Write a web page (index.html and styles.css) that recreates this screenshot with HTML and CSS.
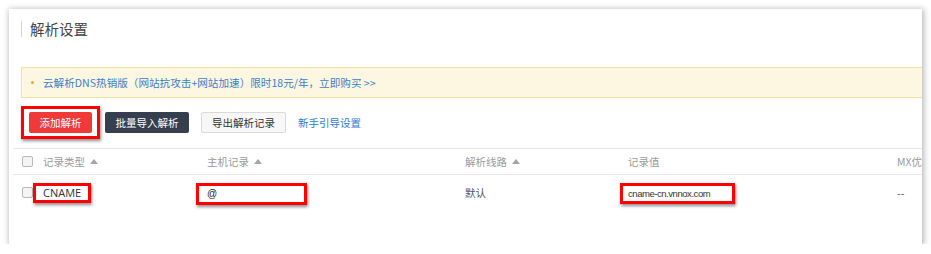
FILE: index.html
```html
<!DOCTYPE html>
<html lang="zh-CN">
<head>
  <meta charset="UTF-8" />
  <meta name="viewport" content="width=device-width, initial-scale=1.0" />
  <title>解析设置</title>
  <link rel="stylesheet" href="styles.css">
</head>
<body>
  <div class="panel">
    <h1 class="title">解析设置</h1>

    <div class="notice">
      <span class="dot"></span>
      <a href="#">云解析DNS热销版（网站抗攻击+网站加速）限时18元/年，立即购买 &gt;&gt;</a>
    </div>

    <div class="toolbar">
      <span class="mark mark-btn"><button class="btn btn-red">添加解析</button></span>
      <button class="btn btn-dark">批量导入解析</button>
      <button class="btn btn-light">导出解析记录</button>
      <a class="guide" href="#">新手引导设置</a>
    </div>

    <div class="table">
      <div class="row head">
        <div><span class="check"></span></div>
        <div>记录类型<i class="sort"></i></div>
        <div>主机记录<i class="sort"></i></div>
        <div>解析线路<i class="sort"></i></div>
        <div>记录值</div>
        <div class="nowrap">MX优先级</div>
      </div>
      <div class="row data">
        <div><span class="check"></span></div>
        <div><span class="mark mark-type">CNAME</span></div>
        <div><span class="mark mark-host">@</span></div>
        <div class="plain">默认</div>
        <div><span class="mark mark-value">cname-cn.vnnox.com</span></div>
        <div class="plain">--</div>
      </div>
    </div>
  </div>
</body>
</html>
```

FILE: styles.css
```css
html, body {
  margin: 0;
  padding: 0;
  background-color: #fff;
}
body {
  font-family: "Noto Sans CJK SC", "Noto Sans", sans-serif;
  font-size: 10.5px;
  color: #333;
  overflow: hidden;
}
.panel {
  margin: 9px 0 0 9px;
  width: 913px;
  height: 235px;
  background-color: #fff;
  box-shadow: 1px 1px 6px 1px rgba(0,0,0,0.28);
  overflow: hidden;
}
.title {
  margin: 12px 0 0 12px;
  padding-left: 8px;
  border-left: 1px solid #d5d5d5;
  height: 16px;
  line-height: 16px;
  font-size: 14.5px;
  font-weight: normal;
  color: #444;
}
.notice {
  display: flex;
  align-items: center;
  margin: 30px 0 0 12px;
  padding-left: 9px;
  height: 29px;
  background-color: #fdf7e2;
  border: 1px solid #f1e0a8;
  border-right: none;
  font-size: 10.6px;
}
.dot {
  width: 3px;
  height: 3px;
  border-radius: 50%;
  background-color: #f0a43a;
  margin-right: 9px;
}
.notice a {
  color: #3b7cc9;
  text-decoration: none;
}
.toolbar {
  display: flex;
  align-items: center;
  margin: 8px 0 0 12px;
  height: 33px;
}
.btn {
  height: 21px;
  padding: 0;
  border: none;
  border-radius: 2px;
  font-family: inherit;
  font-size: 10.5px;
  cursor: pointer;
}
.btn-red {
  display: block;
  width: 63px;
  background-color: #f03a3a;
  color: #fff;
}
.btn-dark {
  width: 84px;
  margin-left: 5px;
  background-color: #363f4e;
  color: #fff;
}
.btn-light {
  width: 85px;
  margin-left: 12px;
  background-color: #f7f7f7;
  border: 1px solid #dadada;
  color: #333;
}
.guide {
  margin-left: 12px;
  color: #2f7bd0;
  text-decoration: none;
}
.mark {
  display: inline-block;
  border: 3px solid #f00;
  box-shadow: 1px 2px 3px rgba(0,0,0,0.45);
  background-color: #fff;
}
.mark-btn {
  padding: 3px 5px;
}
.table {
  margin: 9px 0 0 4px;
  border-top: 1px solid #e6e6e6;
}
.row {
  display: grid;
  grid-template-columns: 21px 164px 258px 163px 269px 1fr;
  padding-left: 9px;
}
.head {
  height: 25px;
  align-items: center;
  border-bottom: 1px solid #e8e8e8;
  color: #9a9a9a;
}
.sort {
  display: inline-block;
  margin-left: 5px;
  border-left: 4px solid transparent;
  border-right: 4px solid transparent;
  border-bottom: 5px solid #a5a5a5;
  vertical-align: 2px;
}
.nowrap {
  white-space: nowrap;
}
.check {
  display: block;
  width: 9px;
  height: 9px;
  border: 1px solid #b8b8b8;
  border-radius: 2px;
  background-color: #f4f4f4;
}
.data {
  padding-top: 8px;
  align-items: start;
}
.data .check {
  margin-top: 4px;
}
.plain {
  line-height: 20px;
  color: #555;
}
.mark-type {
  margin-left: -10px;
  padding: 0 7px;
  line-height: 14px;
  font-family: "Open Sans", sans-serif;
  font-size: 11px;
  color: #333;
}
.mark-host {
  box-sizing: border-box;
  width: 111px;
  margin-left: -11px;
  padding-left: 8px;
  line-height: 16px;
  font-family: "Liberation Sans", sans-serif;
  font-size: 10px;
  color: #222;
}
.mark-value {
  box-sizing: border-box;
  width: 115px;
  margin-left: -8px;
  padding-left: 5px;
  line-height: 15px;
  font-family: "Liberation Sans", sans-serif;
  font-size: 9.5px;
  letter-spacing: -0.45px;
  color: #333;
}
```
